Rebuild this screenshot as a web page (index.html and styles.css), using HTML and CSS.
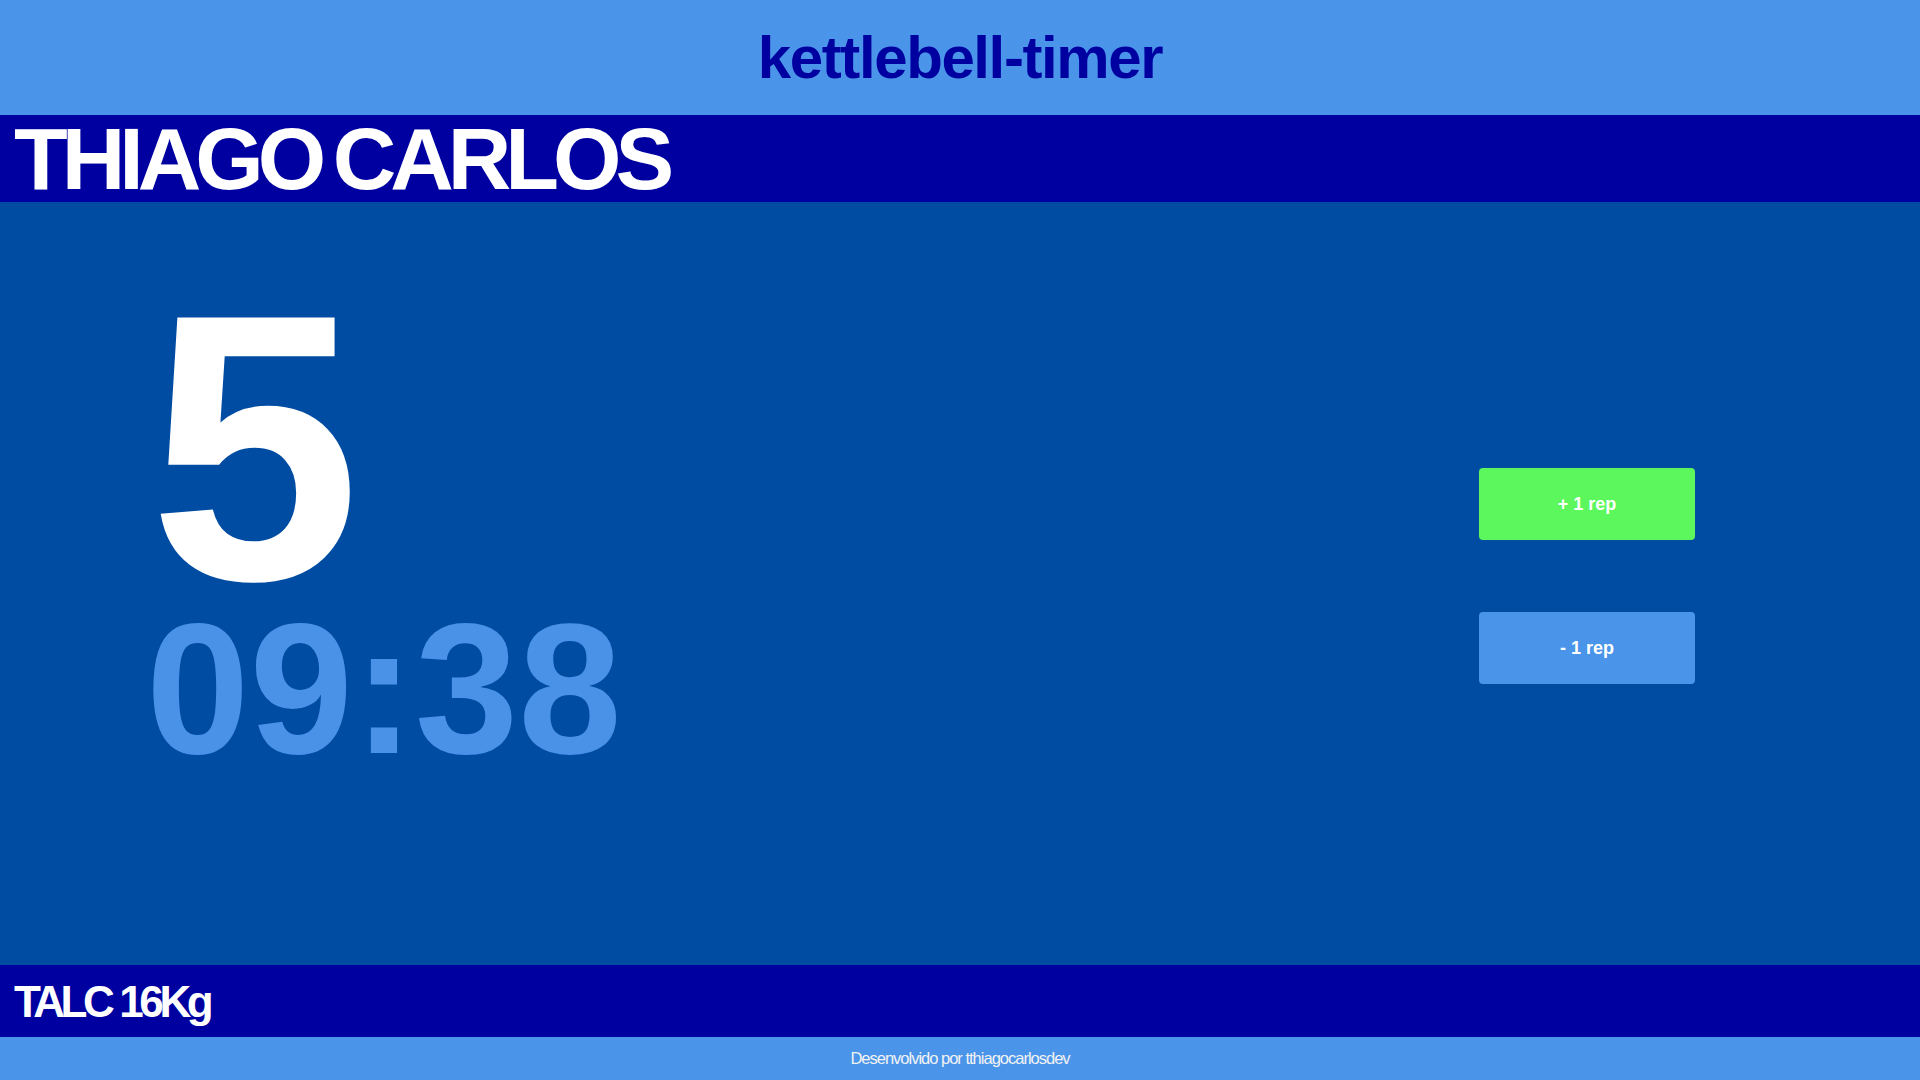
FILE: index.html
```html
<!DOCTYPE html>
<html lang="pt-BR">
<head>
<meta charset="utf-8">
<title>kettlebell-timer</title>
<link rel="stylesheet" href="styles.css">
</head>
<body>
<header class="top">
  <h1 class="app-title">kettlebell-timer</h1>
</header>
<section class="name-bar">
  <h2 class="athlete">THIAGO CARLOS</h2>
</section>
<main class="stage">
  <div class="counter">
    <div class="reps">5</div>
    <div class="clock">09:38</div>
  </div>
  <div class="controls">
    <button class="btn btn-plus" type="button">+ 1 rep</button>
    <button class="btn btn-minus" type="button">- 1 rep</button>
  </div>
</main>
<section class="tag-bar">
  <h3 class="tag">TALC 16Kg</h3>
</section>
<footer class="foot">
  <p class="credit">Desenvolvido por tthiagocarlosdev</p>
</footer>
</body>
</html>
```
FILE: styles.css
```css
* { box-sizing: border-box; }
html, body { margin: 0; padding: 0; }
body {
  height: 100vh;
  display: flex;
  flex-direction: column;
  font-family: "Liberation Sans", Arial, sans-serif;
  background: #004ca3;
  overflow: hidden;
}
.top {
  height: 115px;
  flex: 0 0 115px;
  background: #4a95ea;
  display: flex;
  align-items: center;
  justify-content: center;
}
.app-title {
  margin: 0;
  font-size: 60px;
  line-height: 69px;
  font-weight: 700;
  letter-spacing: -1.4px;
  color: #0000a0;
}
.name-bar {
  height: 87px;
  flex: 0 0 87px;
  background: #0000a0;
  padding-left: 14px;
}
.athlete {
  margin: 0;
  font-size: 88px;
  line-height: 87px;
  font-weight: 700;
  letter-spacing: -6px;
  word-spacing: -6px;
  color: #ffffff;
  white-space: nowrap;
}
.stage {
  flex: 1 1 auto;
  display: flex;
  background: #004ca3;
}
.counter {
  display: flex;
  flex-direction: column;
  padding-top: 89px;
  padding-left: 149px;
}
.reps {
  font-size: 380px;
  line-height: 314px;
  font-weight: 700;
  color: #ffffff;
}
.clock {
  font-size: 186px;
  line-height: 168px;
  font-weight: 700;
  color: #4a92e8;
  margin-left: -3px;
}
.controls {
  margin-left: auto;
  margin-right: 225px;
  align-self: center;
  display: flex;
  flex-direction: column;
  gap: 72px;
  padding-bottom: 15px;
}
.btn {
  width: 216px;
  height: 72px;
  border: 0;
  border-radius: 4px;
  font-family: "Liberation Sans", Arial, sans-serif;
  font-size: 18px;
  font-weight: 700;
  color: #ffffff;
  cursor: pointer;
}
.btn-plus { background: #5cf75c; }
.btn-minus { background: #4a95ea; }
.tag-bar {
  height: 72px;
  flex: 0 0 72px;
  background: #0000a0;
  display: flex;
  align-items: center;
  padding-left: 14px;
}
.tag {
  margin: 0;
  font-size: 44px;
  line-height: 51px;
  font-weight: 700;
  letter-spacing: -4.4px;
  word-spacing: 1px;
  color: #ffffff;
}
.foot {
  height: 43px;
  flex: 0 0 43px;
  background: #4a95ea;
  display: flex;
  align-items: center;
  justify-content: center;
}
.credit {
  margin: 0;
  font-size: 16.5px;
  letter-spacing: -1px;
  color: #f2f2f2;
}
```
